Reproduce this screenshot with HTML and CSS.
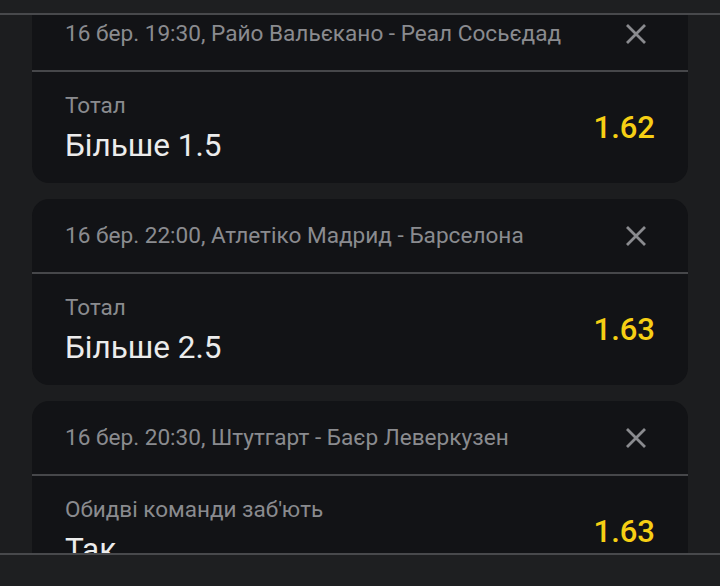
FILE: index.html
```html
<!DOCTYPE html>
<html lang="uk">
<head>
<meta charset="utf-8">
<link rel="stylesheet" href="styles.css">
</head>
<body>
<div class="topbar"></div>
<main class="list">
  <section class="card first">
    <div class="card-head">
      <span class="match">16 бер. 19:30, Райо Вальєкано - Реал Сосьєдад</span>
      <svg class="close" viewBox="0 0 22 22" width="22" height="22"><path d="M2 2 L20 20 M20 2 L2 20" stroke="#8a8b8f" stroke-width="2.8" stroke-linecap="butt" fill="none"/></svg>
    </div>
    <div class="card-body">
      <div class="bet">
        <span class="market">Тотал</span>
        <span class="outcome">Більше 1.5</span>
      </div>
      <span class="odds">1.62</span>
    </div>
  </section>
  <section class="card">
    <div class="card-head">
      <span class="match">16 бер. 22:00, Атлетіко Мадрид - Барселона</span>
      <svg class="close" viewBox="0 0 22 22" width="22" height="22"><path d="M2 2 L20 20 M20 2 L2 20" stroke="#8a8b8f" stroke-width="2.8" stroke-linecap="butt" fill="none"/></svg>
    </div>
    <div class="card-body">
      <div class="bet">
        <span class="market">Тотал</span>
        <span class="outcome">Більше 2.5</span>
      </div>
      <span class="odds">1.63</span>
    </div>
  </section>
  <section class="card">
    <div class="card-head">
      <span class="match">16 бер. 20:30, Штутгарт - Баєр Леверкузен</span>
      <svg class="close" viewBox="0 0 22 22" width="22" height="22"><path d="M2 2 L20 20 M20 2 L2 20" stroke="#8a8b8f" stroke-width="2.8" stroke-linecap="butt" fill="none"/></svg>
    </div>
    <div class="card-body">
      <div class="bet">
        <span class="market">Обидві команди заб'ють</span>
        <span class="outcome">Так</span>
      </div>
      <span class="odds">1.63</span>
    </div>
  </section>
</main>
<div class="bottombar"></div>
</body>
</html>
```
FILE: styles.css
```css
html, body {
  margin: 0;
  padding: 0;
  background: #1c1d1f;
  height: 586px;
  overflow: hidden;
  font-family: Roboto, "Noto Sans", "Liberation Sans", sans-serif;
}
.topbar {
  position: fixed;
  top: 0;
  left: 0;
  right: 0;
  height: 13px;
  background: #1e1f21;
  border-bottom: 2px solid #48494c;
  z-index: 5;
}
.bottombar {
  position: fixed;
  top: 553px;
  left: 0;
  right: 0;
  bottom: 0;
  background: #1e1f21;
  border-top: 2px solid #48494c;
  z-index: 5;
}
.list {
  display: flex;
  flex-direction: column;
  gap: 16px;
  padding: 0 32px;
}
.card {
  background: #121316;
  border-radius: 17px;
  height: 186px;
  display: flex;
  flex-direction: column;
}
.card.first {
  margin-top: -3px;
}
.card-head {
  height: 73px;
  display: flex;
  align-items: center;
  justify-content: space-between;
  padding: 0 41px 0 33px;
  border-bottom: 2px solid #46474a;
}
.match {
  font-size: 22.6px;
  color: #8a8b8f;
}
.close {
  display: block;
}
.card-body {
  flex: 1;
  display: flex;
  align-items: center;
  justify-content: space-between;
  padding: 0 33px;
}
.bet {
  display: flex;
  flex-direction: column;
  gap: 10px;
  margin-top: 1px;
}
.market {
  font-size: 22.5px;
  color: #8a8b8f;
  line-height: 26px;
}
.outcome {
  font-size: 31.5px;
  color: #ececec;
  line-height: 36px;
}
.odds {
  font-size: 31px;
  font-weight: 500;
  color: #f6cf14;
}
```
